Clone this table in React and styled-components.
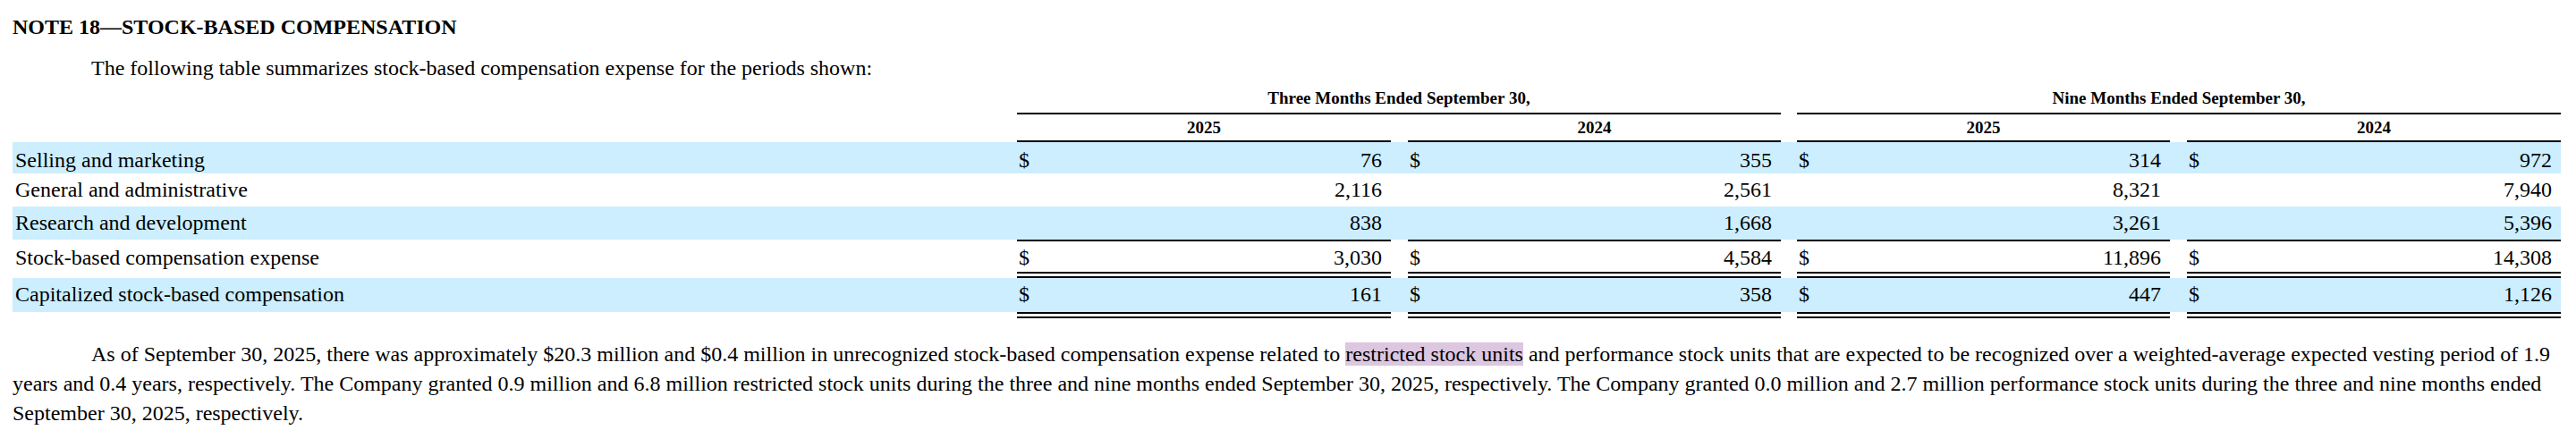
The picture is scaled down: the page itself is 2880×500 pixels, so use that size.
import styled, {createGlobalStyle} from "styled-components";
import {Fragment} from "react";

const GlobalStyle = createGlobalStyle`
  body {
    margin: 0;
    background: #fff;
    color: #000;
    font-family: "Liberation Serif", "Times New Roman", serif;
  }
`;

const periods = [
    {title: 'Three Months Ended September 30,', years: ['2025', '2024']},
    {title: 'Nine Months Ended September 30,', years: ['2025', '2024']},
];

// label, 2025, gap, 2024, gap, 2025, gap, 2024
const columnWidths = [1123, 418, 19, 417, 18, 417, 19, 418];

const rows = [
    {label: 'Selling and marketing', values: ['76', '355', '314', '972'], dollar: true, shade: true, pad: '6px 0 1px'},
    {label: 'General and administrative', values: ['2,116', '2,561', '8,321', '7,940'], pad: '4px 0 5px'},
    {label: 'Research and development', values: ['838', '1,668', '3,261', '5,396'], shade: true, pad: '4px 0 5px'},
    {label: 'Stock-based compensation expense', values: ['3,030', '4,584', '11,896', '14,308'], dollar: true, rule: true, double: true, pad: '4px 0 2px'},
    {label: 'Capitalized stock-based compensation', values: ['161', '358', '447', '1,126'], dollar: true, shade: true, double: true, pad: '4px 0 6px'},
];

const App = () => {
    return (
        <Page>
            <GlobalStyle/>
            <Title>NOTE 18—STOCK-BASED COMPENSATION</Title>
            <Para>The following table summarizes stock-based compensation expense for the periods shown:</Para>

            <Table>
                <colgroup>
                    {columnWidths.map((w, i) => <Col key={i} $width={w}/>)}
                </colgroup>
                <thead>
                <tr>
                    <td/>
                    <GroupHead colSpan={3}>{periods[0].title}</GroupHead>
                    <td/>
                    <GroupHead colSpan={3}>{periods[1].title}</GroupHead>
                </tr>
                <tr>
                    <td/>
                    {periods.flatMap((p) => p.years).map((year, i) => (
                        <Fragment key={i}>
                            {i > 0 && <td/>}
                            <YearHead>{year}</YearHead>
                        </Fragment>
                    ))}
                </tr>
                </thead>
                <tbody>
                {rows.map((row) => (
                    <Row key={row.label} $shade={row.shade} $pad={row.pad} $double={row.double}>
                        <LabelCell>{row.label}</LabelCell>
                        {row.values.map((value, i) => (
                            <Fragment key={i}>
                                {i > 0 && <td/>}
                                <AmountCell $rule={row.rule} $double={row.double}>
                                    <Amount>
                                        <span>{row.dollar ? '$' : '\u00a0'}</span>
                                        <span>{value}</span>
                                    </Amount>
                                </AmountCell>
                            </Fragment>
                        ))}
                    </Row>
                ))}
                </tbody>
            </Table>

            <BodyPara>
                As of September 30, 2025, there was approximately $20.3 million and $0.4 million in unrecognized
                stock-based compensation expense related to <Highlight>restricted stock units</Highlight> and
                performance stock units that are expected to be recognized over a weighted-average expected vesting
                period of 1.9 years and 0.4 years, respectively. The Company granted 0.9 million and 6.8 million
                restricted stock units during the three and nine months ended September 30, 2025, respectively. The
                Company granted 0.0 million and 2.7 million performance stock units during the three and nine months
                ended September 30, 2025, respectively.
            </BodyPara>
        </Page>
    );
};

export default App;

const Page = styled.div`
  padding: 16px 17px 0 14px;
`;

const Title = styled.h2`
  margin: 0;
  font-size: 24px;
  line-height: 28px;
  font-weight: 700;
`;

const Para = styled.p`
  margin: 16px 0 0;
  font-size: 24px;
  line-height: 33px;
  text-indent: 88px;
`;

const BodyPara = styled(Para)`
  margin-top: 24px;
`;

const Highlight = styled.span`
  background-color: #dcc6e0;
`;

const Table = styled.table`
  margin-top: 6px;
  width: 2849px;
  table-layout: fixed;
  border-collapse: separate;
  border-spacing: 0;
  font-size: 24px;

  td, th {
    padding: 0;
  }
`;

const Col = styled.col`
  width: ${({$width}) => $width}px;
`;

const GroupHead = styled.th`
  font-size: 19px;
  line-height: 22px;
  font-weight: 700;
  text-align: center;
  padding: 0 0 5px !important;
  border-bottom: 2px solid #000;
`;

const YearHead = styled(GroupHead)`
  padding: 4px 0 3px !important;
`;

const Row = styled.tr`
  td {
    padding: ${({$pad}) => $pad};
    line-height: 28px;
    vertical-align: baseline;
    background-color: ${({$shade}) => $shade ? '#cceeff' : 'transparent'};
    background-clip: padding-box;
    border-bottom: ${({$double}) => $double ? '7px solid transparent' : 'none'};
  }
`;

const LabelCell = styled.td`
  padding-left: 3px !important;
  white-space: nowrap;
`;

const AmountCell = styled.td`
  border-top: ${({$rule}) => $rule ? '2px solid #000' : 'none'};
  border-bottom: ${({$double}) => $double ? '7px double #000' : 'none'} !important;
`;

const Amount = styled.div`
  display: flex;
  justify-content: space-between;
  align-items: baseline;
  padding: 0 10px 0 2px;
`;
